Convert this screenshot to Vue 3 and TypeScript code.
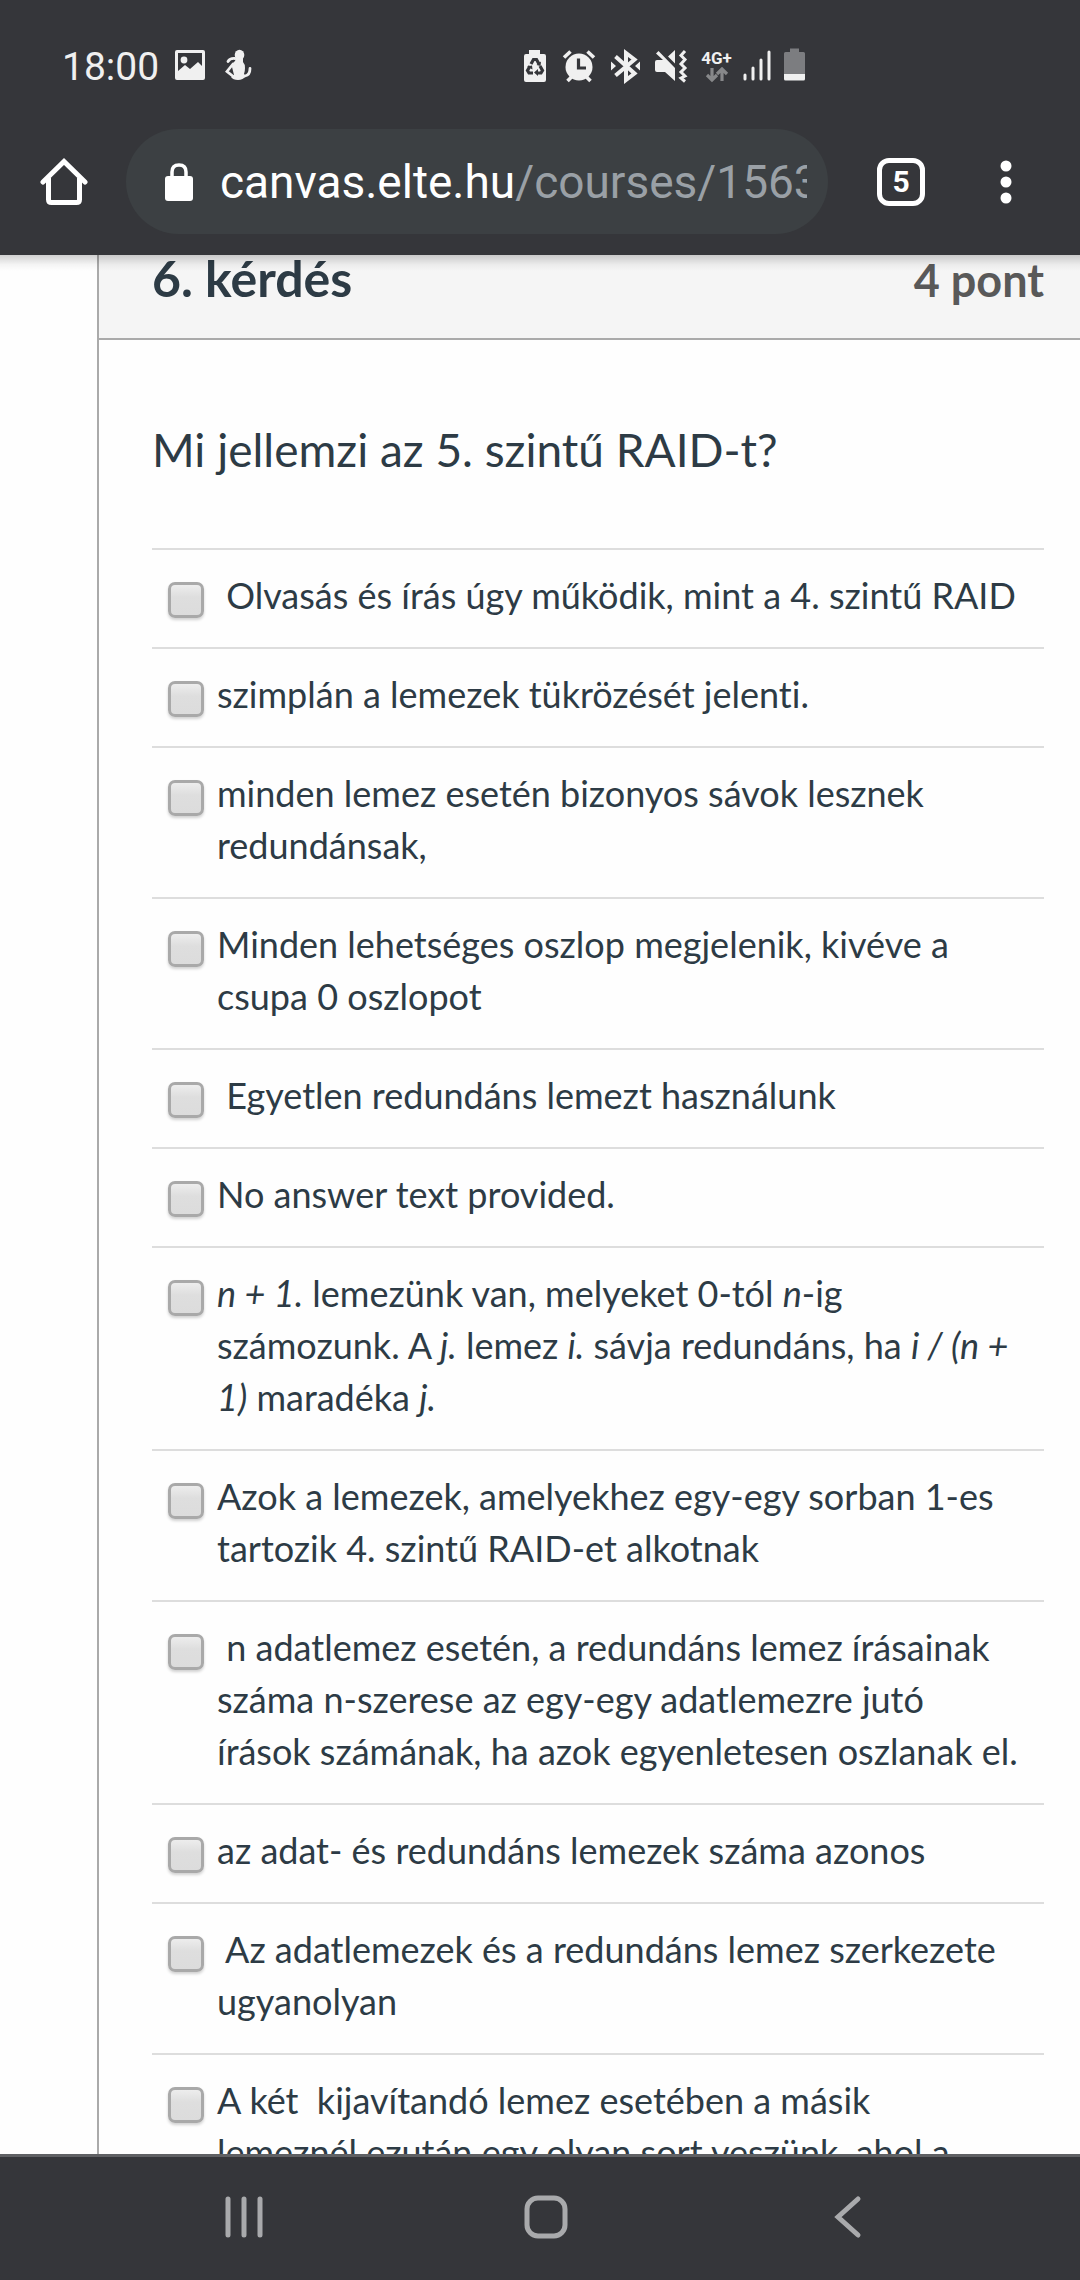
<script setup lang="ts">
interface Segment {
  text: string
  italic?: boolean
}

interface Answer {
  id: number
  segments: Segment[]
}

const plain = (id: number, text: string): Answer => ({ id, segments: [{ text }] })

const answers: Answer[] = [
  plain(1, '\u00a0Olvasás és írás úgy működik, mint a 4. szintű RAID'),
  plain(2, 'szimplán a lemezek tükrözését jelenti.'),
  plain(3, 'minden lemez esetén bizonyos sávok lesznek\nredundánsak,'),
  plain(4, 'Minden lehetséges oszlop megjelenik, kivéve a\ncsupa 0 oszlopot'),
  plain(5, '\u00a0Egyetlen redundáns lemezt használunk'),
  plain(6, 'No answer text provided.'),
  {
    id: 7,
    segments: [
      { text: 'n + 1.', italic: true },
      { text: ' lemezünk van, melyeket 0-tól ' },
      { text: 'n', italic: true },
      { text: '-ig\nszámozunk. A ' },
      { text: 'j.', italic: true },
      { text: ' lemez ' },
      { text: 'i.', italic: true },
      { text: ' sávja redundáns, ha ' },
      { text: 'i / (n +\n1)', italic: true },
      { text: ' maradéka ' },
      { text: 'j.', italic: true },
    ],
  },
  plain(8, 'Azok a lemezek, amelyekhez egy-egy sorban 1-es\ntartozik 4. szintű RAID-et alkotnak'),
  plain(9, '\u00a0n adatlemez esetén, a redundáns lemez írásainak\nszáma n-szerese az egy-egy adatlemezre jutó\nírások számának, ha azok egyenletesen oszlanak el.'),
  plain(10, 'az adat- és redundáns lemezek száma azonos'),
  plain(11, '\u00a0Az adatlemezek és a redundáns lemez szerkezete\nugyanolyan'),
  plain(12, 'A két\u00a0 kijavítandó lemez esetében a másik\nlemeznél ezután egy olyan sort veszünk, ahol a'),
]
</script>

<template>
  <div class="phone">
    <header class="chrome">
      <div class="status">
        <div class="status-left">
          <span class="clock">18:00</span>
          <svg class="picture" width="32" height="32" viewBox="0 0 32 32" aria-hidden="true">
            <path fill="#f0f0f0" fill-rule="evenodd" d="M3 1h26q2 0 2 2v26q0 2-2 2H3q-2 0-2-2V3q0-2 2-2zM4 4v18l7-6 5 4 8-7 4 4V4z" />
            <circle cx="10" cy="11" r="3.4" fill="#f0f0f0" />
          </svg>
          <svg width="28" height="32" viewBox="0 0 28 32" aria-hidden="true">
            <ellipse cx="15.500" cy="6" rx="4.800" ry="5.200" fill="#f0f0f0" />
            <path fill="#f0f0f0" d="M12 9h7v4q2 2 2 6 0 3-1 6l2 2q-3 4-8 4-5 0-7-3 2-1 3-2l-2-8q0-4 3-6z" />
            <path d="M9 15 3 22.500 10 28M21 27q5-1 5-7.500" fill="none" stroke="#f0f0f0" stroke-width="2.800" stroke-linecap="round" />
            <path d="M4 12.500Q6 9 11 9.500" fill="none" stroke="#f0f0f0" stroke-width="2.800" stroke-linecap="round" />
          </svg>
        </div>
        <div class="status-right">
          <svg width="36" height="38" viewBox="0 0 36 38" aria-hidden="true">
            <path fill="#f0f0f0" d="M13 4h11v4h4q2 0 2 2v24q0 2-2 2H10q-2 0-2-2V10q0-2 2-2h3z" />
            <g fill="none" stroke="#35363a" stroke-width="3.200">
              <path d="m15 18 2.500-4.500h3L23 18" />
              <path d="m14 20-2.500 4.500 1.500 2.500h4" />
              <path d="m24 20 2.500 4.500-1.500 2.500h-4" />
            </g>
            <path fill="#35363a" d="m20.500 19 4 1 .500-4.500zM22 23v7l-4-3.500zM11 20.500l5-1 .500 4z" />
          </svg>
          <svg width="36" height="38" viewBox="0 0 36 38" aria-hidden="true">
            <circle cx="17" cy="21" r="13.500" fill="#f0f0f0" />
            <path d="m2 11.500 6.500-6M32 11.500l-6.500-6" stroke="#f0f0f0" stroke-width="3.600" />
            <path d="m5.500 35 5-5M28.500 35l-5-5" stroke="#f0f0f0" stroke-width="3.600" />
            <path d="M16.500 12.500v9.500H24" fill="none" stroke="#35363a" stroke-width="3.200" />
          </svg>
          <svg width="36" height="38" viewBox="0 0 36 38" aria-hidden="true">
            <path d="m7.500 10.500 19 17-8.500 6.500V7l8.500 6.500-19 16" fill="none" stroke="#f0f0f0" stroke-width="4" />
            <path fill="#f0f0f0" d="M3 15.500 8 20l-5 4.500zM32 15.500 27 20l5 4.500z" />
          </svg>
          <svg width="36" height="38" viewBox="0 0 36 38" aria-hidden="true">
            <path fill="#f0f0f0" d="M1 16q0-2 2-2h6L2 7.500 4.500 5 21 22v13L11 26H3q-2 0-2-2zM14 10.500 21 4v13.500z" />
            <path d="m31 5-4 4.500 4 4-4 4.500 4 4-4 4 4 4-4 2 4 3.500" fill="none" stroke="#f0f0f0" stroke-width="3" />
          </svg>
          <div class="network">
            <span>4G+</span>
            <svg width="24" height="16" viewBox="0 0 24 16" aria-hidden="true">
              <path d="M7 1v11M2 8l5 5 5-5M17 14V3M12 7l5-5 5 5" fill="none" stroke="#87888a" stroke-width="3.200" />
            </svg>
          </div>
          <svg width="28" height="38" viewBox="0 0 28 38" aria-hidden="true">
            <path d="M2 29v4M10 22v11M18 14v19M26 6v27" stroke="#f0f0f0" stroke-width="3" stroke-linecap="round" />
          </svg>
          <svg width="25" height="38" viewBox="0 0 25 38" aria-hidden="true">
            <path fill="#7c7d80" d="M9 2.500h9V6h4.500q1.500 0 1.500 1.500V29H3V7.500Q3 6 4.500 6H9z" />
            <path fill="#f0f0f0" d="M3 28h21v5q0 1.500-1.500 1.500h-18Q3 34.500 3 33z" />
          </svg>
        </div>
      </div>

      <nav class="toolbar" aria-label="Böngésző">
        <button class="icon-button" type="button" aria-label="Kezdőlap">
          <svg width="48" height="48" viewBox="0 0 48 48">
            <path d="M3 24 24 3.500 45 24" fill="none" stroke="#fff" stroke-width="5" stroke-linecap="round" />
            <path d="M8.500 20v21.500q0 3 3 3h25q3 0 3-3V20" fill="none" stroke="#fff" stroke-width="5" />
          </svg>
        </button>
        <button class="address" type="button">
          <svg width="30" height="38" viewBox="0 0 30 38" aria-hidden="true">
            <path d="M8 15V9q0-7 7-7t7 7v6" fill="none" stroke="#fff" stroke-width="3.500" />
            <rect x="1" y="13" width="28" height="25" rx="3" fill="#fff" />
          </svg>
          <span class="url">canvas.elte.hu<span class="path">/courses/15634</span></span>
        </button>
        <button class="tabs" type="button" aria-label="5 megnyitott lap">5</button>
        <button class="icon-button" type="button" aria-label="Menü">
          <svg width="12" height="48" viewBox="0 0 12 48">
            <circle cx="6" cy="8" r="5.500" fill="#fff" />
            <circle cx="6" cy="24" r="5.500" fill="#fff" />
            <circle cx="6" cy="40" r="5.500" fill="#fff" />
          </svg>
        </button>
      </nav>
    </header>

    <main class="page">
      <section class="question">
        <div class="question-head">
          <h1>6. kérdés</h1>
          <span class="points">4 pont</span>
        </div>
        <div class="question-body">
          <h2>Mi jellemzi az 5. szintű RAID-t?</h2>
          <ul class="answers">
            <li v-for="answer in answers" :key="answer.id">
              <input :id="`answer-${answer.id}`" type="checkbox" />
              <label :for="`answer-${answer.id}`"><template v-for="(part, i) in answer.segments" :key="i"><em v-if="part.italic">{{ part.text }}</em><template v-else>{{ part.text }}</template></template></label>
            </li>
          </ul>
        </div>
      </section>
    </main>

    <nav class="system" aria-label="Rendszer">
      <button type="button" aria-label="Legutóbbi">
        <svg width="44" height="44" viewBox="0 0 44 44">
          <path d="M6 4v36M22 4v36M38 4v36" stroke="#a9aaac" stroke-width="5" stroke-linecap="round" />
        </svg>
      </button>
      <button type="button" aria-label="Főképernyő">
        <svg width="44" height="44" viewBox="0 0 44 44">
          <rect x="3" y="3" width="38" height="38" rx="11" fill="none" stroke="#a9aaac" stroke-width="5" />
        </svg>
      </button>
      <button type="button" aria-label="Vissza">
        <svg width="44" height="44" viewBox="0 0 44 44">
          <path d="M33 4 13 22l20 18" fill="none" stroke="#a9aaac" stroke-width="5" stroke-linecap="round" />
        </svg>
      </button>
    </nav>
  </div>
</template>

<style>
body {
  margin: 0;
}
</style>

<style scoped>
.phone {
  display: flex;
  flex-direction: column;
  height: 100vh;
  overflow: hidden;
  background: #fefefe;
  color: #2d3b45;
  font-family: Lato, "Noto Sans", sans-serif;
  font-variant-ligatures: none;
}

svg {
  display: block;
  flex: none;
}

button {
  padding: 0;
  border: 0;
  background: none;
  color: inherit;
  font: inherit;
}

.chrome {
  position: relative;
  z-index: 1;
  flex: none;
  background: #35363a;
  color: #fff;
  font-family: Roboto, sans-serif;
}

.chrome::after {
  content: "";
  position: absolute;
  top: 100%;
  left: 0;
  right: 0;
  height: 16px;
  background: linear-gradient(rgba(0, 0, 0, 0.18), rgba(0, 0, 0, 0.04) 60%, transparent);
}

.status {
  display: flex;
  align-items: center;
  padding-top: 46px;
  color: #f0f0f0;
}

.status-left {
  display: flex;
  align-items: center;
  box-sizing: border-box;
  width: 516px;
  padding-left: 62px;
  gap: 15px;
}

.clock {
  padding-top: 4px;
  font-size: 39px;
  line-height: 34px;
}

.picture {
  margin-right: 3px;
}

.status-right {
  display: flex;
  gap: 10px;
}

.network {
  display: flex;
  flex-direction: column;
  align-items: center;
  width: 33px;
  padding-top: 3px;
  font-size: 17px;
  font-weight: 700;
  line-height: 18px;
}

.toolbar {
  display: flex;
  align-items: center;
  padding: 45px 68px 21px 40px;
}

.icon-button {
  flex: none;
}

.address {
  display: flex;
  flex: 1;
  align-items: center;
  min-width: 0;
  height: 105px;
  margin: 0 49px 0 38px;
  padding: 0 21px 0 38px;
  gap: 26px;
  border-radius: 53px;
  background: #3c4043;
  text-align: left;
}

.url {
  flex: 1;
  min-width: 0;
  overflow: hidden;
  font-size: 46px;
  line-height: 60px;
  white-space: nowrap;
}

.path {
  color: #9aa0a6;
}

.tabs {
  box-sizing: border-box;
  width: 48px;
  height: 48px;
  margin-right: 75px;
  border: 5px solid #fff;
  border-radius: 12px;
  font-size: 30px;
  font-weight: 700;
  line-height: 36px;
}

.page {
  flex: 1;
  min-height: 0;
  overflow: hidden;
}

.question {
  margin-left: 97px;
  border-left: 2px solid #aaa;
}

.question-head {
  display: flex;
  align-items: baseline;
  justify-content: space-between;
  padding: 0 36px 35px 53px;
  border-bottom: 2px solid #aaa;
  background: #f5f5f5;
  line-height: 46px;
}

h1 {
  margin: 0;
  font-size: 50px;
  font-weight: 700;
}

.points {
  color: #595959;
  font-size: 45px;
  font-weight: 700;
}

.question-body {
  padding: 75px 36px 0 53px;
}

h2 {
  margin: 0 0 64px;
  font-size: 46px;
  font-weight: 400;
  line-height: 69px;
}

.answers {
  margin: 0;
  padding: 0;
  list-style: none;
}

.answers li {
  display: flex;
  align-items: flex-start;
  padding: 19px 0 26px 16px;
  gap: 13px;
  border-top: 2px solid #ddd;
  font-size: 36px;
  line-height: 52px;
}

.answers label {
  flex: 1;
  white-space: pre-line;
}

.answers input {
  flex: none;
  box-sizing: border-box;
  width: 36px;
  height: 36px;
  margin: 13px 0 0;
  appearance: none;
  border: 3px solid #a9a9a9;
  border-radius: 7px;
  background: linear-gradient(#ededed, #dedede 40%, #dcdcdc);
  box-shadow: 0 2px 3px rgba(0, 0, 0, 0.18);
}

.answers input:checked {
  background: #9aa0a6;
}

.system {
  display: flex;
  flex: none;
  align-items: center;
  justify-content: space-between;
  box-sizing: border-box;
  height: 126px;
  padding: 0 211px 4px 222px;
  border-top: 3px solid #5f6063;
  background: #35363a;
}
</style>
